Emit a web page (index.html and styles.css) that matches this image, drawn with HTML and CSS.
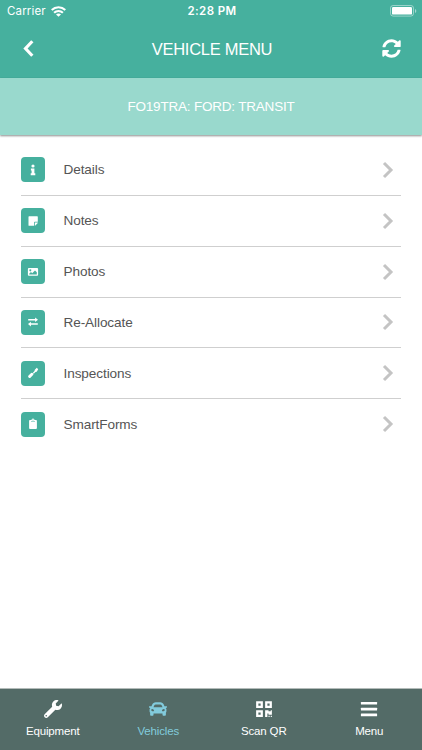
FILE: index.html
```html
<!DOCTYPE html>
<html lang="en">
  <head>
    <meta charset="UTF-8" />
    <meta name="viewport" content="width=device-width, initial-scale=1.0" />
    <title>Vehicle Menu</title>
    <link rel="stylesheet" href="styles.css">
  </head>
  <body>
    <div class="app">
      <header class="header">
        <div class="status-bar">
          <div class="carrier">
            <span>Carrier</span>
            <svg class="wifi" viewBox="0 0 28 20">
              <g fill="none" stroke="white" stroke-width="3.9">
                <path d="M1.3 7.2a18 18 0 0 1 25.4 0" />
                <path d="M5.8 12.4a11.5 11.5 0 0 1 16.4 0" />
              </g>
              <path d="M9.3 15.6a6.4 6.4 0 0 1 9.4 0L14 20z" fill="white" />
            </svg>
          </div>
          <span class="time">2:28 PM</span>
          <svg class="battery" viewBox="0 0 27 12">
            <rect x="0.5" y="0.5" width="23" height="10.6" rx="2.6" fill="none" stroke="white" stroke-opacity="0.45" />
            <rect x="2" y="2" width="20" height="7.6" rx="1.2" fill="white" />
            <path d="M25 4v4q1.3-.5 1.3-2T25 4z" fill="white" fill-opacity="0.5" />
          </svg>
        </div>
        <div class="title-bar">
          <svg class="back" viewBox="0 0 10 16">
            <path d="M8.6 1.2L2.2 8l6.4 6.8" fill="none" stroke="white" stroke-width="3" />
          </svg>
          <h1 class="title">VEHICLE MENU</h1>
          <svg class="refresh" viewBox="0 0 512 512" fill="white">
            <path d="M370.72 133.28C339.458 104.008 298.888 87.962 255.848 88c-77.458.068-144.328 53.178-162.791 126.85-1.344 5.363-6.122 9.15-11.651 9.15H24.103c-7.498 0-13.194-6.807-11.807-14.176C33.933 94.924 134.813 8 256 8c66.448 0 126.791 26.136 171.315 68.685L463.03 40.97C478.149 25.851 504 36.559 504 57.941V192c0 13.255-10.745 24-24 24H345.941c-21.382 0-32.09-25.851-16.971-40.971l41.75-41.749zM32 296h134.059c21.382 0 32.09 25.851 16.971 40.971l-41.75 41.75c31.262 29.273 71.835 45.319 114.876 45.28 77.418-.07 144.315-53.144 162.787-126.849 1.344-5.363 6.122-9.15 11.651-9.15h57.304c7.498 0 13.194 6.807 11.807 14.176C478.067 417.076 377.187 504 256 504c-66.448 0-126.791-26.136-171.315-68.685L48.97 471.03C33.851 486.149 8 475.441 8 454.059V320c0-13.255 10.745-24 24-24z" />
          </svg>
        </div>
      </header>

      <div class="vehicle"><span>FO19TRA: FORD: TRANSIT</span></div>

      <main class="list">
        <div class="row">
          <div class="tile">
            <svg viewBox="0 0 12 12" fill="white">
              <circle cx="6" cy="2" r="1.6" />
              <path d="M3.9 4.5h3.5v4.8h.9v1.9H3.7V9.3h.9V6.4h-.7z" />
            </svg>
          </div>
          <span class="label">Details</span>
          <svg class="chevron" viewBox="0 0 12 18"><path d="M2 2l7 7-7 7" /></svg>
        </div>
        <div class="row">
          <div class="tile">
            <svg viewBox="0 0 12 12" fill="white">
              <path d="M2.1 1.2h8.1q.6 0 .6.6v5H7.7q-.6 0-.6.6v3.4h-5q-.6 0-.6-.6V1.8q0-.6.6-.6z" />
              <path d="M7.9 7.6h2.9v.3l-2.7 2.8h-.2z" />
            </svg>
          </div>
          <span class="label">Notes</span>
          <svg class="chevron" viewBox="0 0 12 18"><path d="M2 2l7 7-7 7" /></svg>
        </div>
        <div class="row">
          <div class="tile">
            <svg viewBox="0 0 12 12" fill="white">
              <path fill-rule="evenodd" d="M1.9 2h8.2q1 0 1 1v5.8q0 1-1 1H1.9q-1 0-1-1V3q0-1 1-1zM3.3 3.2a1 1 0 1 0 .01 0zM2.2 8.5h7.6V6.2L8 4.4 5.2 7.2 4 6 2.2 7.7z" />
            </svg>
          </div>
          <span class="label">Photos</span>
          <svg class="chevron" viewBox="0 0 12 18"><path d="M2 2l7 7-7 7" /></svg>
        </div>
        <div class="row">
          <div class="tile">
            <svg viewBox="0 0 12 12" fill="white">
              <path d="M1.2 2.9h6.9V1.4L11 3.7 8.1 6V4.5H1.2zM10.8 7.2H3.9V5.8L1 8.1l2.9 2.3V8.8h6.9z" />
            </svg>
          </div>
          <span class="label">Re-Allocate</span>
          <svg class="chevron" viewBox="0 0 12 18"><path d="M2 2l7 7-7 7" /></svg>
        </div>
        <div class="row">
          <div class="tile">
            <svg viewBox="0 0 12 12" fill="white">
              <path d="M9.8.8l1.4 1.4-1.5 2.5-1.2.3-1.7 1.7-.9-.9 1.6-1.7.3-1.3zM4.1 6q1-.7 1.9.2t.1 1.9l-2.6 2.6q-.9.8-1.9-.2t-.1-1.9z" />
            </svg>
          </div>
          <span class="label">Inspections</span>
          <svg class="chevron" viewBox="0 0 12 18"><path d="M2 2l7 7-7 7" /></svg>
        </div>
        <div class="row">
          <div class="tile">
            <svg viewBox="0 0 12 12" fill="white">
              <path fill-rule="evenodd" d="M3 1.9h1.5a1.5 1.5 0 0 1 3 0H9q.9 0 .9.9v7.3q0 .9-.9.9H3q-.9 0-.9-.9V2.8q0-.9.9-.9zM6 1.4a.5.5 0 1 0 .01 0zM4 3v.6h4V3z" />
            </svg>
          </div>
          <span class="label">SmartForms</span>
          <svg class="chevron" viewBox="0 0 12 18"><path d="M2 2l7 7-7 7" /></svg>
        </div>
      </main>

      <nav class="tabs">
        <div class="tab">
          <svg viewBox="0 0 512 512" fill="currentColor">
            <path d="M507.73 109.1c-2.24-9.03-13.54-12.09-20.12-5.51l-74.36 74.36-67.88-11.31-11.31-67.88 74.36-74.36c6.62-6.62 3.43-17.9-5.66-20.16-47.38-11.74-99.55.91-136.58 37.93-39.64 39.64-50.55 97.1-34.05 147.2L18.74 402.76c-24.99 24.99-24.99 65.51 0 90.5 24.99 24.99 65.51 24.99 90.5 0l213.21-213.21c50.12 16.71 107.47 5.68 147.37-34.22 37.07-37.07 49.7-89.32 37.91-136.73zM64 472c-13.25 0-24-10.75-24-24 0-13.26 10.75-24 24-24s24 10.74 24 24c0 13.25-10.75 24-24 24z" />
          </svg>
          <span>Equipment</span>
        </div>
        <div class="tab active">
          <svg viewBox="0 0 512 512" fill="currentColor">
            <path d="M499.99 176h-59.87l-16.64-41.6C406.38 91.63 365.57 64 319.5 64h-127c-46.06 0-86.88 27.63-103.99 70.4L71.87 176H12.01C4.2 176-1.53 183.34.37 190.91l6 24C7.7 220.25 12.5 224 18.01 224h20.07C24.65 235.73 16 252.78 16 272v48c0 16.12 6.16 30.67 16 41.93V416c0 17.67 14.33 32 32 32h32c17.67 0 32-14.33 32-32v-32h256v32c0 17.67 14.33 32 32 32h32c17.67 0 32-14.33 32-32v-54.07c9.84-11.25 16-25.8 16-41.93v-48c0-19.22-8.65-36.27-22.07-48H494c5.51 0 10.31-3.75 11.64-9.09l6-24c1.89-7.57-3.84-14.91-11.65-14.91zm-352.06-17.83c7.29-18.22 24.94-30.17 44.57-30.17h127c19.63 0 37.28 11.95 44.57 30.17L384 208H128l19.93-49.83zM96 319.8c-19.2 0-32-12.76-32-31.9S76.8 256 96 256s48 28.71 48 47.85-28.8 15.95-48 15.95zm320 0c-19.2 0-48 3.19-48-15.95S396.8 256 416 256s32 12.76 32 31.9-12.8 31.9-32 31.9z" />
          </svg>
          <span>Vehicles</span>
        </div>
        <div class="tab">
          <svg viewBox="-32 0 512 512" fill="currentColor">
            <path d="M0 224h192V32H0v192zM64 96h64v64H64V96zm192-64v192h192V32H256zm128 128h-64V96h64v64zM0 480h192V288H0v192zm64-128h64v64H64v-64zm352-64h32v128h-96v-32h-32v96h-64V288h96v32h64v-32zm0 160h32v32h-32v-32zm-64 0h32v32h-32v-32z" />
          </svg>
          <span>Scan QR</span>
        </div>
        <div class="tab">
          <svg viewBox="0 0 18 18" fill="currentColor">
            <rect x="0.9" y="1.9" width="16.2" height="2.7" rx="0.5" />
            <rect x="0.9" y="7.7" width="16.2" height="2.7" rx="0.5" />
            <rect x="0.9" y="13.5" width="16.2" height="2.7" rx="0.5" />
          </svg>
          <span>Menu</span>
        </div>
      </nav>
    </div>
  </body>
</html>
```
FILE: styles.css
```css
body {
  margin: 0;
  background-color: white;
  font-family: "Liberation Sans", Arial, sans-serif;
}
svg {
  display: block;
  flex: none;
}
.app {
  display: flex;
  flex-direction: column;
  height: 750px;
  overflow: hidden;
}
.header {
  height: 78px;
  background-color: #46b09e;
  color: white;
}
.status-bar {
  display: grid;
  grid-template-columns: 1fr auto 1fr;
  align-items: center;
  height: 22px;
  padding: 0 5px 0 7px;
  font-family: Inter, sans-serif;
  font-size: 11.5px;
}
.carrier {
  display: flex;
  align-items: center;
  gap: 5px;
  letter-spacing: 0.15px;
}
.wifi {
  width: 15px;
  height: 11px;
}
.time {
  font-weight: 600;
  letter-spacing: 0.4px;
}
.battery {
  width: 27px;
  height: 12px;
  justify-self: end;
}
.title-bar {
  display: grid;
  grid-template-columns: 1fr auto 1fr;
  align-items: center;
  height: 54px;
  padding: 0 21px 0 23px;
}
.back {
  width: 11px;
  height: 17px;
  margin-bottom: 2px;
}
.title {
  margin: 0;
  font-size: 16.5px;
  font-weight: 400;
  letter-spacing: -0.28px;
}
.refresh {
  width: 19px;
  height: 19px;
  margin-bottom: 2px;
  justify-self: end;
}
.vehicle {
  display: flex;
  align-items: center;
  justify-content: center;
  height: 57px;
  background-color: #99d9cd;
  color: white;
  font-size: 13.5px;
  letter-spacing: -0.2px;
  box-shadow: 0 1px 2px rgba(0, 0, 0, 0.45);
}
.list {
  flex: 1;
  padding: 10px 21px 0;
}
.row {
  display: flex;
  align-items: center;
  box-sizing: border-box;
  height: 50.85px;
  padding-right: 7px;
  border-bottom: 1px solid #cfcfcf;
}
.row:last-child {
  border-bottom-color: transparent;
}
.tile {
  display: flex;
  align-items: center;
  justify-content: center;
  width: 24px;
  height: 25px;
  margin-right: 18.5px;
  border-radius: 4px;
  background-color: #46b09e;
}
.tile svg {
  width: 12px;
  height: 12px;
}
.label {
  flex: 1;
  color: #555;
  font-size: 13.6px;
  letter-spacing: -0.1px;
}
.chevron {
  width: 12px;
  height: 18px;
  fill: none;
  stroke: #c4c4c4;
  stroke-width: 3;
}
.tabs {
  display: grid;
  grid-template-columns: repeat(4, 1fr);
  box-sizing: border-box;
  height: 62px;
  border-top: 1px solid #b3bbb9;
  background-color: #536b67;
  color: white;
}
.tab {
  display: flex;
  flex-direction: column;
  align-items: center;
  padding-top: 11px;
  font-size: 11.5px;
  line-height: 14px;
  letter-spacing: -0.15px;
}
.tab svg {
  width: 18px;
  height: 18px;
  margin-bottom: 6px;
}
.active {
  color: #82cbdc;
}
```
